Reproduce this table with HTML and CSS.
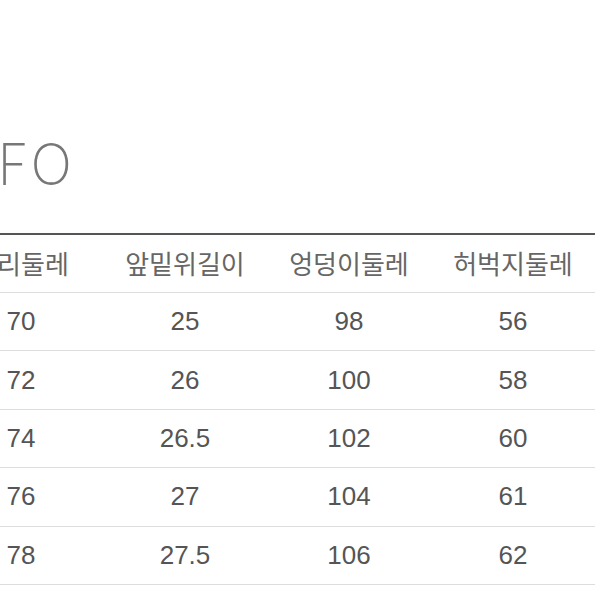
FILE: index.html
```html
<!DOCTYPE html>
<html lang="ko">
<head>
<meta charset="utf-8">
<link rel="stylesheet" href="styles.css">
</head>
<body>
<div class="page">
  <div class="title-wrap"><h1 class="title">FO</h1></div>
  <table class="size-table">
    <thead>
      <tr><th>허리둘레</th><th>앞밑위길이</th><th>엉덩이둘레</th><th>허벅지둘레</th></tr>
    </thead>
    <tbody>
      <tr><td>70</td><td>25</td><td>98</td><td>56</td></tr>
      <tr><td>72</td><td>26</td><td>100</td><td>58</td></tr>
      <tr><td>74</td><td>26.5</td><td>102</td><td>60</td></tr>
      <tr><td>76</td><td>27</td><td>104</td><td>61</td></tr>
      <tr><td>78</td><td>27.5</td><td>106</td><td>62</td></tr>
    </tbody>
  </table>
</div>
</body>
</html>
```
FILE: styles.css
```css
html, body {
  margin: 0;
  padding: 0;
  background: #fff;
}
.page {
  width: 597px;
  height: 597px;
  overflow: hidden;
}
.title-wrap {
  height: 233px;
  display: flex;
  align-items: flex-start;
}
.title {
  margin: 132px 0 0 -2px;
  font-family: "Lato", "Liberation Sans", sans-serif;
  font-weight: 300;
  font-size: 60px;
  line-height: 1;
  color: #777;
  letter-spacing: 6px;
  transform: scaleX(0.84);
  transform-origin: left center;
}
.size-table {
  margin-left: -61px;
  border-collapse: collapse;
  table-layout: fixed;
  width: 656px;
  font-family: "Liberation Sans", "Noto Sans CJK KR", sans-serif;
  color: #555;
}
.size-table th,
.size-table td {
  width: 164px;
  padding: 0;
  text-align: center;
  font-weight: normal;
}
.size-table thead tr {
  border-top: 2px solid #555;
  border-bottom: 1px solid #ddd;
}
.size-table th {
  height: 54px;
  padding-bottom: 3px;
  font-family: "Noto Sans CJK KR", sans-serif;
  font-size: 26px;
  color: #666;
}
.size-table td {
  height: 57.4px;
  font-size: 26px;
  border-bottom: 1px solid #ddd;
}
```
